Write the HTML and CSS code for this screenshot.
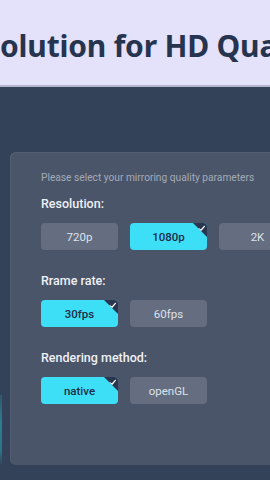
FILE: index.html
```html
<!DOCTYPE html>
<html lang="en">
<head>
  <meta charset="UTF-8" />
  <title>Mirroring Quality</title>
  <link rel="stylesheet" href="styles.css">
</head>
<body>

  <!-- top banner, title runs off both edges -->
  <div class="banner">
    <h1 class="banner-title">Resolution for HD Quality</h1>
  </div>

  <div class="main">
    <div class="side-stub"></div>

    <div class="panel">
      <p class="hint">Please select your mirroring quality parameters</p>

      <div class="group">
        <div class="group-label">Resolution:</div>
        <div class="options">
          <button type="button" class="opt">720p</button>
          <button type="button" class="opt selected">1080p
            <span class="tick"><svg viewBox="0 0 10 10" width="9" height="9"><path d="M2 5.2 L4.2 7.2 L8.2 2.6" fill="none" stroke="#fff" stroke-width="1.4" stroke-linecap="round" stroke-linejoin="round"/></svg></span>
          </button>
          <button type="button" class="opt">2K</button>
        </div>
      </div>

      <div class="group">
        <div class="group-label">Rrame rate:</div>
        <div class="options">
          <button type="button" class="opt selected">30fps
            <span class="tick"><svg viewBox="0 0 10 10" width="9" height="9"><path d="M2 5.2 L4.2 7.2 L8.2 2.6" fill="none" stroke="#fff" stroke-width="1.4" stroke-linecap="round" stroke-linejoin="round"/></svg></span>
          </button>
          <button type="button" class="opt">60fps</button>
        </div>
      </div>

      <div class="group">
        <div class="group-label">Rendering method:</div>
        <div class="options">
          <button type="button" class="opt selected">native
            <span class="tick"><svg viewBox="0 0 10 10" width="9" height="9"><path d="M2 5.2 L4.2 7.2 L8.2 2.6" fill="none" stroke="#fff" stroke-width="1.4" stroke-linecap="round" stroke-linejoin="round"/></svg></span>
          </button>
          <button type="button" class="opt">openGL</button>
        </div>
      </div>
    </div>
  </div>

</body>
</html>
```

FILE: styles.css
```css
body {
  margin: 0;
  width: 270px;
  height: 480px;
  overflow: hidden;
  background: #344259;
  font-family: Roboto, "Noto Sans", sans-serif;
}
.banner {
  height: 85px;
  background: #e3e2fa;
  border-bottom: 2px solid #b4b5cc;
  overflow: hidden;
  white-space: nowrap;
}
.banner-title {
  margin: 0 0 0 -52px;
  padding-top: 25px;
  font-family: "Noto Sans", sans-serif;
  font-size: 30px;
  font-weight: bold;
  line-height: 41px;
  letter-spacing: -0.2px;
  color: #27344f;
}
.main {
  display: flex;
  align-items: flex-end;
  gap: 8px;
  padding-top: 65px;
}
.side-stub {
  flex: none;
  width: 2px;
  height: 70px;
  background: linear-gradient(#32566f, #2b7f92 40%, #2a7487 80%, #344259);
}
.panel {
  flex: none;
  width: 300px;
  height: 313px;
  box-sizing: border-box;
  padding: 19px 0 0 31px;
  background: #4a5569;
  border-radius: 6px;
  box-shadow: inset 1px 1px 0 #525d71;
}
.hint {
  margin: 0;
  font-size: 10.2px;
  line-height: 14px;
  color: #a3aab8;
}
.group {
  margin-top: 11px;
}
.group + .group {
  margin-top: 23px;
}
.group-label {
  font-size: 12.5px;
  line-height: 16px;
  font-weight: 500;
  color: #eef0f6;
}
.options {
  display: flex;
  gap: 12px;
  margin-top: 11px;
}
.opt {
  position: relative;
  flex: none;
  width: 77px;
  height: 27px;
  padding: 0;
  border: none;
  border-radius: 4px;
  overflow: hidden;
  background: #656e80;
  color: #dde1ea;
  font-family: Roboto, sans-serif;
  font-size: 11.5px;
}
.opt.selected {
  background: #3ddff7;
  color: #1e2c48;
  font-weight: 500;
}
.tick {
  position: absolute;
  top: 0;
  right: 0;
  width: 14px;
  height: 14px;
  background: #2a3650;
  clip-path: polygon(0 0, 100% 0, 100% 100%);
}
.tick svg {
  position: absolute;
  top: 1px;
  right: 1px;
}
```
